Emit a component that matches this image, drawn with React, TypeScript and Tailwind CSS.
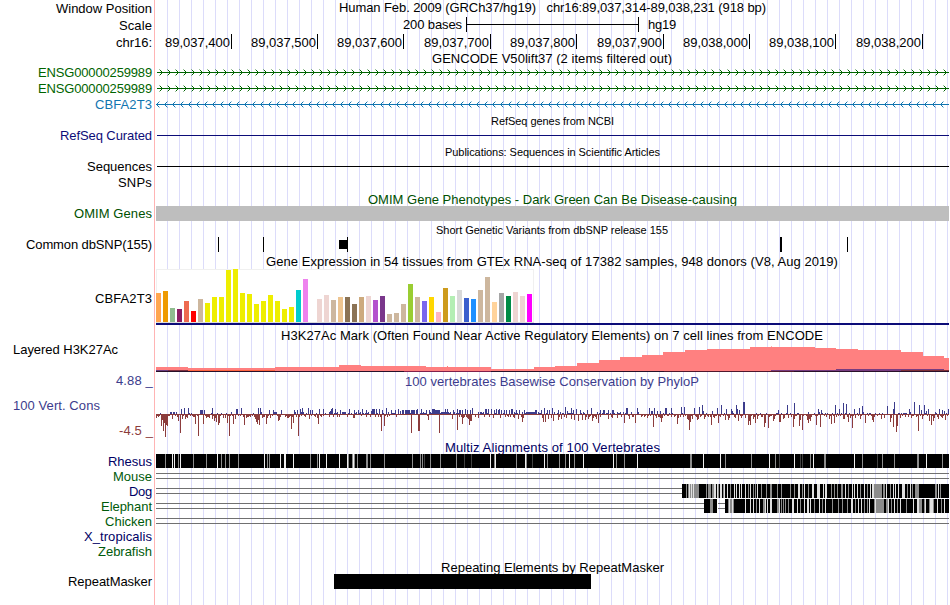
import React, { useLayoutEffect, useRef } from "react";

/** Single line of text whose tracking is adjusted to span exactly `w` pixels. */
function Fit({ w, children }: { w: number; children: string }) {
  const ref = useRef<HTMLSpanElement>(null);
  useLayoutEffect(() => {
    const el = ref.current!;
    el.style.letterSpacing = "0px";
    const natural = el.getBoundingClientRect().width;
    el.style.letterSpacing = `${(w - natural) / children.length}px`;
  }, [w, children]);
  return (
    <span ref={ref} className="inline-block whitespace-pre">
      {children}
    </span>
  );
}

const GREEN = "text-[#006400]";
const NAVY = "text-[#000064]";
const DKGREEN = "text-[#005a0a]";
const BLUE = "text-[#3c3c8c]";

type Label = { t: string; w: number; h: string; c?: string; left?: boolean; wide?: boolean };
const labels: Label[] = [
  { t: "Window Position", w: 96, h: "h-[17px]" },
  { t: "Scale", w: 33, h: "h-[17px]" },
  { t: "chr16:", w: 36, h: "h-[30px]" },
  { t: "ENSG00000259989", w: 114, h: "h-4", c: GREEN },
  { t: "ENSG00000259989", w: 114, h: "h-4", c: GREEN },
  { t: "CBFA2T3", w: 57, h: "h-[31px]", c: "text-[#1175b0]" },
  { t: "RefSeq Curated", w: 92, h: "h-[31px]", c: "text-[#0c0c78]" },
  { t: "Sequences", w: 65, h: "h-4" },
  { t: "SNPs", w: 34, h: "h-[31px]" },
  { t: "OMIM Genes", w: 78, h: "h-[31px]", c: "text-[#005000]" },
  { t: "Common dbSNP(155)", w: 126, h: "h-[54px]" },
  { t: "CBFA2T3", w: 57, h: "h-[51px]" },
  { t: "Layered H3K27Ac", w: 105, h: "h-[31px]", left: true },
  { t: "4.88 _", w: 37, h: "h-[25px]", c: BLUE, wide: true },
  { t: "100 Vert. Cons", w: 87, h: "h-[25px]", c: BLUE, left: true },
  { t: "-4.5 _", w: 34, h: "h-[31px]", c: "text-[#8c3c3c]", wide: true },
  { t: "Rhesus", w: 44, h: "h-[15px]", c: NAVY },
  { t: "Mouse", w: 39, h: "h-[15px]", c: DKGREEN },
  { t: "Dog", w: 23, h: "h-[15px]", c: NAVY },
  { t: "Elephant", w: 51, h: "h-[15px]", c: DKGREEN },
  { t: "Chicken", w: 47, h: "h-[15px]", c: DKGREEN },
  { t: "X_tropicalis", w: 68, h: "h-[15px]", c: NAVY },
  { t: "Zebrafish", w: 54, h: "h-[30px]", c: DKGREEN },
  { t: "RepeatMasker", w: 84, h: "h-[15px]" },
];

const gtex = (
  "29ffa54f 31ee9a00 148fbc8f 138b1c62 21ee6a50 11ff0000 23cdb79e 19eeee00 25eeee00 25eeee00 52eeee00 53eeee00 " +
  "29eeee00 28eeee00 18eeee00 21eeee00 27eeee00 21eeee00 13eeee00 15eeee00 3200cdcd 43ee82ee 00ffffff 23eed5d2 " +
  "27eed5d2 22cdb79e 25eec591 258b7355 188b7355 25cdaa7d 26eed5d2 22b452cd 267a378b 08cdb79e 09cdb79e 18cdb79e " +
  "389acd32 25cdb79e 217a67ee 25ffd700 10ffb6c1 34cd9b1d 26b4eeb4 32d9d9d9 243a5fcd 231e90ff 32cdb79e 45cdb79e " +
  "20ffd39b 29a6a6a6 26008b45 30eed5d2 26eed5d2 28ff00ff"
)
  .split(" ")
  .map((s) => ({ h: +s.slice(0, 2), c: "#" + s.slice(2) }));

// [start x, top y] of every step of the H3K27Ac signal
const h3k = [
  [156, 367], [188, 368], [275, 367], [339, 365], [361, 366], [426, 367], [491, 369], [534, 367], [555, 366],
  [577, 363], [599, 360], [620, 357], [642, 355], [663, 352], [685, 350], [707, 349], [750, 347], [815, 348],
  [836, 349], [858, 350], [901, 352], [923, 356], [944, 358], [949, 358],
];

// Conservation peaks as "x:height"
const parse = (s: string) => s.trim().split(/\s+/).map((p) => p.split(":").map(Number));
const up = parse(`160:1 170:2 171:2 173:2 174:2 176:2 181:5 184:6 188:6 200:4 201:4 202:4 204:4 212:6 217:1 221:1
231:2 236:5 237:5 241:6 258:6 260:6 261:2 269:4 273:4 274:2 275:2 276:2 281:4 294:4 295:2 297:4 300:5 301:2 302:6
303:2 308:6 310:4 312:4 319:5 323:5 329:2 330:3 331:5 332:6 335:5 337:2 340:4 342:2 343:2 344:2 345:2 349:5
354:4 356:2 358:4 360:2 362:5 366:4 368:2 371:3 372:5 373:5 374:5 376:5 379:5 382:4 386:6 388:2 391:4 395:4
398:5 400:3 402:4 403:4 405:4 406:4 407:4 408:4 409:4 411:4 412:4 413:4 414:4 416:4 417:5 421:5 423:2 426:4 429:4
430:2 432:5 433:5 434:5 435:4 436:4 437:4 438:4 439:4 441:2 442:2 443:2 444:2 445:5 446:2 447:5 448:2 450:2 453:4
454:2 457:5 459:4 460:4 462:4 465:5 467:4 470:4 472:6 478:2 480:2 481:2 483:2 485:5 486:5 488:5 491:5 494:4 496:5
498:4 499:5 501:4 504:4 506:4 509:4 511:5 512:5 514:2 516:4 519:4 522:2 524:4 526:2 527:2 528:2 529:2 530:2 531:2
532:2 533:2 534:2 535:4 536:4 538:2 541:4 544:6 547:4 549:4 552:6 554:2 558:4 560:2 565:7 567:3 571:6 573:4 576:5
580:4 583:2 587:4 591:6 597:2 600:4 603:4 604:4 608:4 612:4 613:4 617:2 620:2 623:2 626:6 627:6 631:2 637:6 638:2
649:6 651:3 652:3 654:6 657:3 660:3 665:6 666:6 671:6 681:7 684:7 694:6 699:7 702:9 703:3 712:3 717:6 721:9
726:5 731:5 732:3 736:9 737:5 739:4 743:12 744:12 778:4 787:9 794:11 808:2 818:5 819:2 821:4 835:9 839:5 843:11
846:10 854:5 859:6 862:8 863:2 887:8 893:5 894:12 904:1 905:1 906:1 909:5 910:2 914:12 919:9 921:4 924:9 926:3
928:5 935:2 939:5 942:4 944:3 948:5`);
const down = parse(`156:4 157:2 158:3 159:2 161:12 162:6 163:17 164:9 165:23 166:11 167:12 168:2 172:5 177:3 178:7
180:19 182:5 185:5 187:4 193:3 195:10 198:22 203:10 206:4 207:3 208:3 209:4 212:5 214:7 215:4 216:8 218:11 219:9
223:4 225:4 227:9 229:22 233:10 235:5 243:3 244:11 246:4 248:3 250:3 252:2 254:3 255:5 256:8 257:10 258:6 259:11
262:4 264:3 266:10 267:4 270:4 278:7 279:6 280:3 287:4 288:4 289:3 291:15 293:9 298:22 301:2 305:3 309:5 315:3
317:4 318:10 323:2 329:3 337:3 347:3 353:4 354:4 366:3 381:17 384:12 396:3 411:19 418:17 419:17 428:6 439:19
452:5 457:16 459:3 462:10 463:4 467:4 468:5 469:11 470:7 471:7 478:4 493:4 500:4 505:3 514:4 518:5 522:8 523:4
542:4 543:8 545:8 548:5 551:4 553:7 558:6 561:5 566:4 571:5 574:6 578:7 582:6 585:6 588:5 592:7 593:4 596:5
598:9 600:3 608:5 612:4 617:4 621:3 624:9 629:5 635:9 641:3 644:3 647:4 653:13 656:4 660:4 661:8 662:4 671:3
677:10 678:4 687:5 688:6 689:16 690:8 692:5 697:6 698:5 704:5 711:11 714:4 718:9 720:3 725:6 728:6 729:4 735:4
738:7 741:4 745:4 748:11 749:7 750:11 753:5 755:9 757:5 764:13 765:9 768:14 773:7 774:5 779:8 780:8 783:5 784:4
788:4 793:13 794:5 799:12 800:6 802:16 807:6 808:9 809:5 810:7 816:11 820:13 829:5 831:10 834:9 843:5 844:5 848:8
850:4 852:14 855:4 860:5 865:9 872:6 873:8 881:5 884:4 890:8 891:4 893:13 896:18 897:12 900:4 905:3 911:4 918:17
922:5 929:7 931:11 933:7 934:4 938:5 942:4 945:6 947:2`);

function noise(i: number) {
  const v = Math.sin(i * 12.9898) * 43758.5453;
  return v - Math.floor(v);
}

// Grey and light gaps in the Rhesus alignment
const rhesusLight = [172, 174, 180, 217, 264, 280, 284, 285, 293, 319, 326, 339, 347, 353, 490, 495, 525, 544, 569, 583, 613, 637, 703, 720, 769, 794, 813, 854, 926];
const rhesusGrey = [165, 178, 193, 206, 221, 225, 229, 238, 267, 269, 310, 317, 348, 352, 354, 357, 366, 367, 370, 384, 412, 420, 422, 430, 440, 456, 494, 516, 526, 547, 559, 565, 574, 616, 624, 690, 691, 725, 751, 775, 810, 824, 825, 862, 882, 894, 917, 918, 942];
const rhesusDark = [424, 464, 471, 532, 779, 800, 802, 877];

// Run lengths in pixels: B black, g grey, w light, - unaligned
const dog =
  "B4 g1 B1 g1 w1 g1 w1 g1 w1 g5 B7 g1 B1 g3 B1 g2 w2 B1 w1 g1 B1 w2 B1 g1 w1 B2 w1 B2 g1 B3 w1 B1 w1 B2 w1 B1 w1 B3 w1 " +
  "B2 g1 B1 w1 B2 g1 B1 g1 B1 w1 B3 g1 B4 g1 B3 g2 B5 g1 B3 g1 B8 g1 B3 g1 B3 w2 B2 g1 B1 w1 B3 g1 B3 w2 B3 w1 " +
  "w2 B3 w1 B1 w2 B4 g1 B2 g1 B2 g1 B3 g2 B2 w1 B2 g1 B3 w1 B1 w1 B2 w1 B2 g1 B3 w1 B2 g1 B2 w1 B1 w2 g8 " +
  "B1 g2 B1 w1 B3 g1 B2 w1 B1 w1 B2 w1 B3 w3 B2 g1 B2 w1 B1 g1 B2 g4 B16 g2 B1 w1 B1 g1 B8";
const elephant =
  "B6 g3 B4 -8 B3 g1 w1 g2 w1 g1 B11 w1 B4 w1 B2 w1 B2 g1 B2 w1 B3 g2 w1 B1 w1 B2 w2 B5 g2 w1 B1 g1 B1 g1 B1 g1 B2 g1 " +
  "B3 w2 B3 w1 B2 g1 B3 w1 B2 w2 B1 w1 B3 g1 B4 w1 B2 g1 B2 w1 B6 g1 B5 g1 B3 g1 B4 g1 B3 w2 B2 g1 B2 w1 B2 w1 " +
  "B2 g1 B2 g1 B1 w1 B4 g1 w1 g8 B2 g2 w1 B2 g1 B2 w1 B2 g1 B2 w1 B5 g1 B1 B5 w1 B3 w2 g3 " +
  "B2 g1 w1 B3 g1 w3 g1 B3 w1 B3 g1 B2 w1 B4";

const codeFill: Record<string, string> = { B: "#000", g: "#8c8c8c", w: "#e0e0e0", "-": "none" };

function Runs({ code, x, y }: { code: string; x: number; y: number }) {
  let at = x;
  return (
    <g>
      {code.split(" ").map((run, i) => {
        const n = +run.slice(1);
        const start = at;
        at += n;
        return <rect key={i} x={start} y={y} width={n} height={14} fill={codeFill[run[0]]} />;
      })}
    </g>
  );
}

function Title({ h, w, c = "", small, children }: { h: string; w: number; c?: string; small?: boolean; children: string }) {
  return (
    <div
      className={`${h} ${c} ${small ? "text-[11px] leading-[13px]" : ""} ${w % 2 ? "" : "pr-px"} flex shrink-0 justify-center overflow-hidden`}
    >
      <Fit w={w}>{children}</Fit>
    </div>
  );
}

function GeneLine({ dir, color }: { dir: 1 | -1; color: string }) {
  const first = dir === 1 ? 162 : 156;
  const tips = Array.from({ length: 99 }, (_, i) => first + i * 8);
  return (
    <svg className="block h-4 w-[793px] shrink-0" viewBox="156 0 793 16" shapeRendering="crispEdges" fill={color}>
      <rect x={dir === 1 ? 157 : 156} y={7} width={793} height={1} />
      {tips.map((t) => (
        <g key={t}>
          <rect x={t - dir} y={6} width={1} height={1} />
          <rect x={t - dir} y={8} width={1} height={1} />
          <rect x={t - 2 * dir} y={5} width={1} height={1} />
          <rect x={t - 2 * dir} y={9} width={1} height={1} />
          <rect x={t - 3 * dir} y={4} width={1} height={1} opacity={0.4} />
          <rect x={t - 3 * dir} y={10} width={1} height={1} opacity={0.4} />
        </g>
      ))}
    </svg>
  );
}

const ticks = [
  { t: "89,037,400", c: "w-[76px]" },
  { t: "89,037,500", c: "w-[86px]" },
  { t: "89,037,600", c: "w-[86px]" },
  { t: "89,037,700", c: "w-[87px]" },
  { t: "89,037,800", c: "w-[86px]" },
  { t: "89,037,900", c: "w-[87px]" },
  { t: "89,038,000", c: "w-[86px]" },
  { t: "89,038,100", c: "w-[86px]" },
  { t: "89,038,200", c: "w-[87px]" },
];

function Expression() {
  return (
    <svg className="block h-[56px] w-[793px] shrink-0" viewBox="156 269 793 56" shapeRendering="crispEdges">
      <rect x={156} y={269} width={378} height={54} fill="#f0f0f0" />
      <rect x={157} y={270} width={376} height={53} fill="#fff" />
      <rect x={156} y={322} width={378} height={1} fill="#dcdcdc" />
      {gtex.map((b, i) => (
        <rect key={i} x={156 + i * 7} y={322 - b.h} width={5} height={b.h} fill={b.c} />
      ))}
      <rect x={156} y={323} width={793} height={2} fill="#0c0c78" />
    </svg>
  );
}

function Acetylation() {
  return (
    <svg className="block h-[31px] w-[793px] shrink-0" viewBox="156 343 793 31" shapeRendering="crispEdges">
      {h3k.slice(0, -1).map(([x, y], i) => (
        <rect key={x} x={x} y={y} width={h3k[i + 1][0] - x} height={371 - y} fill="#ff8080" />
      ))}
      <rect x={447} y={366} width={1} height={1} fill="#ff8080" />
      <rect x={771} y={346} width={1} height={1} fill="#ffb0b0" />
      <rect x={156} y={370} width={12} height={1} fill="#6a3c80" />
      <rect x={168} y={370} width={20} height={1} fill="#803040" />
      <rect x={188} y={370} width={87} height={1} fill="#ff6440" />
      <rect x={771} y={370} width={130} height={1} fill="#783c80" />
      <rect x={836} y={369} width={108} height={1} fill="#783c80" />
      <rect x={901} y={370} width={48} height={1} fill="#803038" />
      <rect x={156} y={371} width={793} height={1} fill="#281028" />
      <rect x={404} y={371} width={87} height={1} fill="#80204a" />
      <rect x={664} y={371} width={130} height={1} fill="#50182c" />
    </svg>
  );
}

function Conservation() {
  const taken = new Set([...up, ...down].map(([x]) => x));
  const filler = Array.from({ length: 793 }, (_, i) => 156 + i).filter((x) => !taken.has(x));
  return (
    <svg className="block h-[51px] w-[793px] shrink-0" viewBox="156 389 793 51" shapeRendering="crispEdges">
      <rect x={156} y={414} width={793} height={1} fill="#8c3c3c" />
      {up.map(([x, h]) => (
        <rect key={x} x={x} y={414 - h} width={1} height={h} fill="#3c3c8c" />
      ))}
      {down.map(([x, h]) => (
        <rect key={x} x={x} y={414} width={1} height={h} fill="#8c3c3c" />
      ))}
      {filler.map((x) => {
        const n = noise(x);
        const mid = x > 318 && x < 640;
        if (n < (mid ? 0.45 : 0.25)) return <rect key={x} x={x} y={413} width={1} height={1} fill="#3c3c8c" />;
        if (n > (mid ? 0.8 : 0.5)) return <rect key={x} x={x} y={414} width={1} height={n > 0.85 ? 3 : 2} fill="#8c3c3c" />;
        return null;
      })}
    </svg>
  );
}

function Alignments() {
  return (
    <svg className="block h-[106px] w-[793px] shrink-0" viewBox="156 454 793 106" shapeRendering="crispEdges">
      <rect x={156} y={454} width={793} height={14} fill="#000" />
      {rhesusGrey.map((x) => <rect key={x} x={x} y={454} width={1} height={14} fill="#8c8c8c" />)}
      {rhesusLight.map((x) => <rect key={x} x={x} y={454} width={1} height={14} fill="#f0f0f0" />)}
      {rhesusDark.map((x) => <rect key={x} x={x} y={454} width={1} height={14} fill="#404040" />)}
      {[[473, 949], [488, 682], [503, 704], [518, 949]].map(([y, end]) => (
        <g key={y} fill="#707070">
          <rect x={156} y={y} width={end - 156} height={1} />
          <rect x={156} y={y + 5} width={end - 156} height={1} />
        </g>
      ))}
      <rect x={718} y={503} width={7} height={1} fill="#707070" />
      <rect x={718} y={508} width={7} height={1} fill="#707070" />
      <Runs code={dog} x={682} y={484} />
      <Runs code={elephant} x={704} y={499} />
    </svg>
  );
}

export default function App() {
  return (
    <div className="flex h-[605px] w-[950px] overflow-hidden bg-white font-['Liberation_Sans',Arial,sans-serif] text-[13px] leading-[15px] text-black">
      <aside className="flex w-[155px] shrink-0 flex-col border-r border-[#ffb4b4] pt-px">
        {labels.map((l, i) => (
          <div
            key={i}
            className={`${l.h} ${l.c ?? ""} flex shrink-0 ${l.left ? "justify-start pl-[13px]" : l.wide ? "justify-end pr-px" : "justify-end pr-[2px]"}`}
          >
            <Fit w={l.w}>{l.t}</Fit>
          </div>
        ))}
      </aside>

      <main className="ml-px flex w-[793px] flex-col bg-[repeating-linear-gradient(90deg,transparent_0px,transparent_11px,#dcdcfa_11px,#dcdcfa_12px)]">
        <Title h="h-[17px]" w={427}>{"Human Feb. 2009 (GRCh37/hg19)   chr16:89,037,314-89,038,231 (918 bp)"}</Title>
        <div className="flex h-[17px] shrink-0 pl-[247px]">
          <div className="w-[63px]"><Fit w={59}>200 bases</Fit></div>
          <div className="flex h-[15px] w-[173px] flex-col justify-center border-x border-black">
            <div className="h-px bg-black" />
          </div>
          <div className="pl-[9px]"><Fit w={28}>hg19</Fit></div>
        </div>
        <div className="flex h-[17px] shrink-0">
          {ticks.map((k) => (
            <div key={k.t} className={`${k.c} flex h-[15px] shrink-0 justify-end border-r border-black pr-px pt-px`}>
              <Fit w={65}>{k.t}</Fit>
            </div>
          ))}
        </div>
        <Title h="h-[14px]" w={240}>GENCODE V50lift37 (2 items filtered out)</Title>
        <GeneLine dir={1} color="#006400" />
        <GeneLine dir={1} color="#006400" />
        <GeneLine dir={-1} color="#1175b0" />
        <div className="h-[2px] shrink-0" />
        <Title h="h-5" w={123} small>RefSeq genes from NCBI</Title>
        <div className="ml-px h-px shrink-0 bg-[#0c0c78]" />
        <div className="h-[10px] shrink-0" />
        <Title h="h-5" w={215} small>Publications: Sequences in Scientific Articles</Title>
        <div className="ml-px h-px shrink-0 bg-black" />
        <div className="h-[25px] shrink-0" />
        <Title h="h-[14px]" w={369} c="text-[#005000]">OMIM Gene Phenotypes - Dark Green Can Be Disease-causing</Title>
        <div className="h-[15px] shrink-0 bg-[#bebebe]" />
        <div className="h-[3px] shrink-0" />
        <Title h="h-[13px]" w={232} small>Short Genetic Variants from dbSNP release 155</Title>
        <svg className="block h-[17px] w-[793px] shrink-0" viewBox="156 237 793 17" shapeRendering="crispEdges">
          <path d="M218 237h1v15h-1zM263 237h1v15h-1zM339 240h8v9h-8zM347 237h1v15h-1zM780 237h2v15h-2zM847 237h1v15h-1z" />
        </svg>
        <Title h="h-[15px]" w={572}>Gene Expression in 54 tissues from GTEx RNA-seq of 17382 samples, 948 donors (V8, Aug 2019)</Title>
        <Expression />
        <div className="h-[3px] shrink-0" />
        <Title h="h-[15px]" w={542}>H3K27Ac Mark (Often Found Near Active Regulatory Elements) on 7 cell lines from ENCODE</Title>
        <Acetylation />
        <Title h="h-[15px]" w={294} c={BLUE}>100 vertebrates Basewise Conservation by PhyloP</Title>
        <Conservation />
        <Title h="h-[14px]" w={215} c={NAVY}>Multiz Alignments of 100 Vertebrates</Title>
        <Alignments />
        <Title h="h-[14px]" w={223}>Repeating Elements by RepeatMasker</Title>
        <div className="ml-[178px] h-[15px] w-[257px] shrink-0 bg-black" />
      </main>
    </div>
  );
}
